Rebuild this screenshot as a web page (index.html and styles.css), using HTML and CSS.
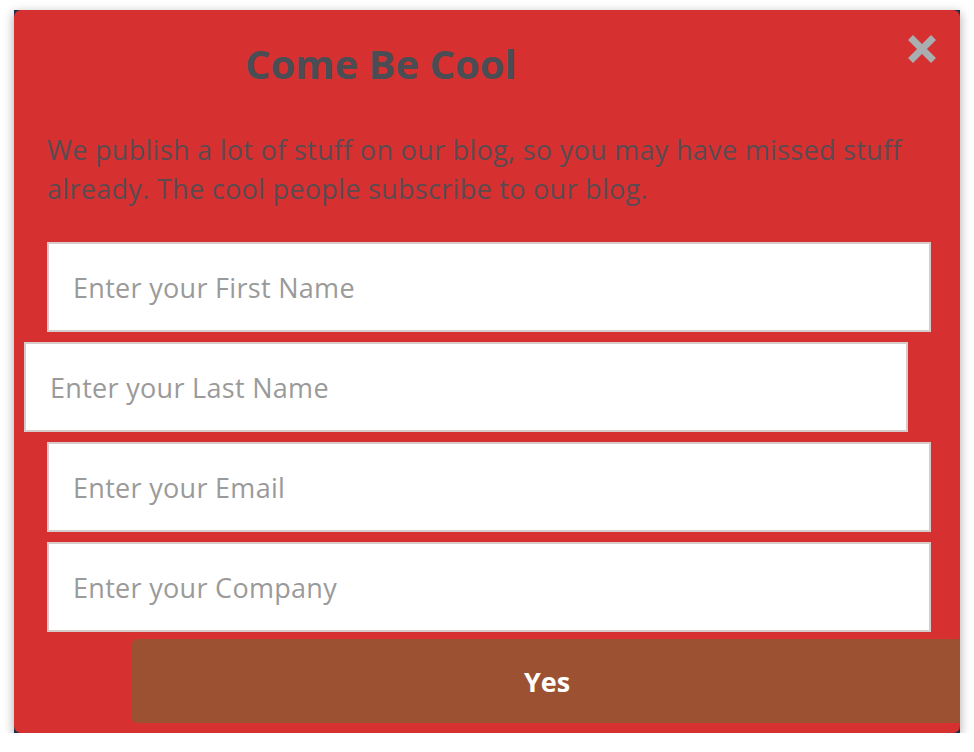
FILE: index.html
```html
<!DOCTYPE html>
<html lang="en">
<head>
	<meta charset="UTF-8">
	<meta name="viewport" content="width=device-width, initial-scale=1">
	<title>Come Be Cool</title>
	<link rel="stylesheet" href="styles.css">
</head>
<body>
	<div class="popup-frame">
		<div class="popup">
			<button type="button" class="close-btn" aria-label="Close">
				<svg width="30" height="30" viewBox="0 0 30 30">
					<path d="M3.5 3.5 L26.5 26.5 M26.5 3.5 L3.5 26.5" stroke="#a9aeb1" stroke-width="7" fill="none"/>
				</svg>
			</button>
			<h2>Come Be Cool</h2>
			<p class="intro">We publish a lot of stuff on our blog, so you may have missed stuff already. The cool people subscribe to our blog.</p>
			<form id="subscribeForm">
				<input type="text" name="first_name" placeholder="Enter your First Name">
				<input type="text" name="last_name" class="shifted" placeholder="Enter your Last Name">
				<input type="email" name="email" placeholder="Enter your Email">
				<input type="text" name="company" placeholder="Enter your Company">
				<button type="submit">Yes</button>
			</form>
		</div>
	</div>
</body>
</html>
```

FILE: styles.css
```css
:root {
	--popup-red: #d63031;
	--popup-back: #1b2f4b;
	--title-color: #4a4e54;
	--text-color: #5b4b50;
	--button-color: #9c5232;
	--field-border: #d6cccc;
	--placeholder: #9a9a9a;
}

body {
	font-family: "Open Sans", Arial, sans-serif;
	margin: 0;
	padding: 0;
	background-color: #fff;
}

.popup-frame {
	width: 946px;
	height: 723px;
	margin: 10px 0 0 14px;
	background: var(--popup-back);
	box-shadow: 0 3px 10px rgba(0, 0, 0, 0.35);
}

.popup {
	position: relative;
	box-sizing: border-box;
	height: 100%;
	padding: 27px 29px 10px 33px;
	background: var(--popup-red);
	border-radius: 7px;
	overflow: hidden;
}

.close-btn {
	position: absolute;
	top: 24px;
	right: 23px;
	padding: 0;
	border: none;
	background: none;
	cursor: pointer;
	line-height: 0;
}

.popup h2 {
	margin: 0 0 39px;
	padding-left: 198px;
	color: var(--title-color);
	font-size: 40px;
	font-weight: 700;
	line-height: 54px;
}

.intro {
	margin: 0 0 34px;
	color: var(--text-color);
	font-size: 27px;
	letter-spacing: 0.3px;
	line-height: 39px;
}

#subscribeForm {
	display: flex;
	flex-direction: column;
	gap: 10px;
}

#subscribeForm input {
	box-sizing: border-box;
	width: 884px;
	height: 90px;
	padding: 0 24px;
	border: 2px solid var(--field-border);
	background: #fff;
	font-family: inherit;
	font-size: 27px;
	letter-spacing: 0.3px;
	color: #555;
	outline: none;
}

#subscribeForm input::placeholder {
	color: var(--placeholder);
}

#subscribeForm input.shifted {
	margin-left: -23px;
}

button[type="submit"] {
	width: 830px;
	height: 84px;
	margin: -3px 0 0 85px;
	border: none;
	border-radius: 5px;
	background: var(--button-color);
	color: #fff;
	font-family: inherit;
	font-size: 27px;
	font-weight: 700;
	cursor: pointer;
}
```
